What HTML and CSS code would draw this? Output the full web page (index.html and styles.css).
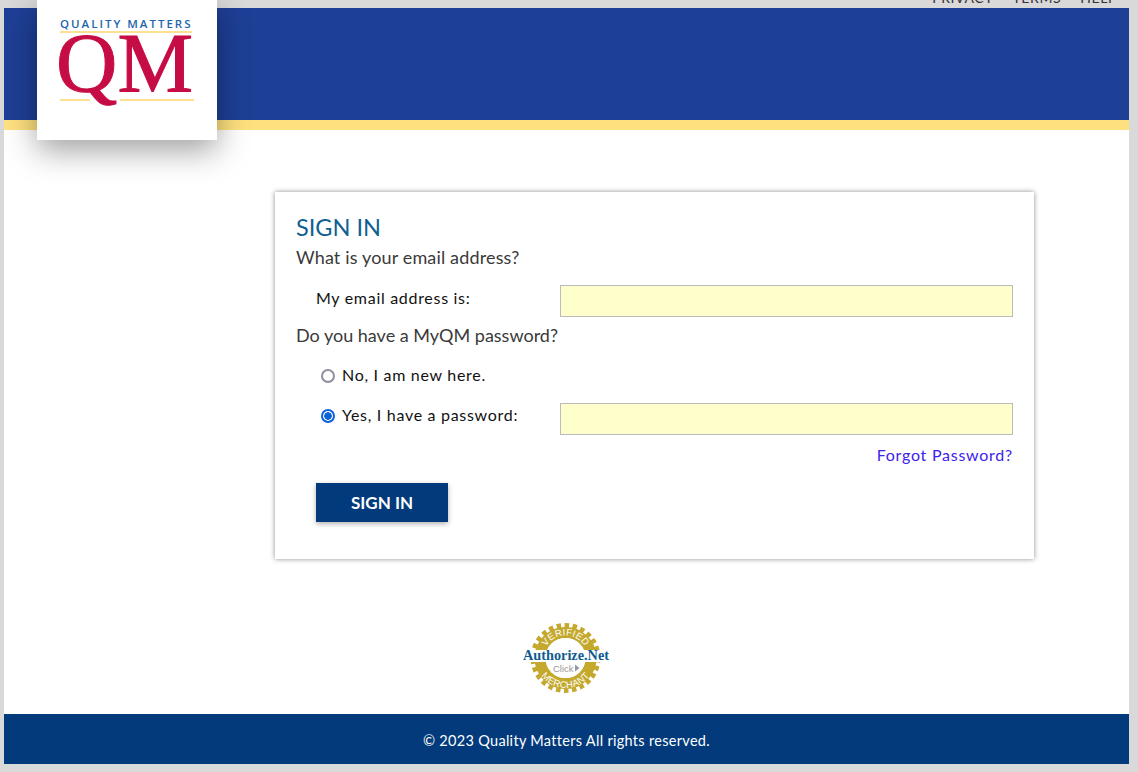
FILE: index.html
```html
<!DOCTYPE html>
<html lang="en">
<head>
<meta charset="utf-8">
<title>Sign In - Quality Matters</title>
<link rel="stylesheet" href="styles.css">
</head>
<body>
<nav class="topnav"><a>PRIVACY</a><a>TERMS</a><a>HELP</a></nav>
<div class="page">
  <header class="header">
    <div class="logo">
      <div class="logo-top">QUALITY MATTERS</div>
      <div class="logo-rule"></div>
      <div class="logo-qm">QM</div>
      <div class="logo-base"><span></span><span></span></div>
    </div>
  </header>
  <main class="main">
    <form class="card">
      <h1 class="title">SIGN IN</h1>
      <p class="question q-email">What is your email address?</p>
      <div class="row row-email">
        <label class="label label-indent">My email address is:</label>
        <input class="field" type="text">
      </div>
      <p class="question q-pass">Do you have a MyQM password?</p>
      <div class="row row-no">
        <label class="label radio-label"><input class="radio" type="radio" name="pw">No, I am new here.</label>
      </div>
      <div class="row row-yes">
        <label class="label radio-label label-yes"><input class="radio" type="radio" name="pw" checked>Yes, I have a password:</label>
        <input class="field" type="password">
      </div>
      <div class="forgot-row"><a class="forgot">Forgot Password?</a></div>
      <button class="btn" type="button">SIGN IN</button>
    </form>
    <div class="badge">
      <svg width="88" height="72" viewBox="0 0 88 72">
        <circle class="gear" cx="42.500" cy="36" r="32.500" stroke-width="5" stroke-dasharray="4.500 3.500" fill="none"/>
        <circle class="gear" cx="42.500" cy="36" r="25.500" stroke-width="11" fill="none"/>
        <circle cx="42.500" cy="36" r="20" fill="#fff"/>
        <path id="arcTop" d="M20 36 A22.500 22.500 0 0 1 65 36" fill="none"/>
        <path id="arcBot" d="M12.500 36 A30 30 0 0 0 72.500 36" fill="none"/>
        <text class="arc"><textPath href="#arcTop" startOffset="50%" text-anchor="middle">VERIFIED</textPath></text>
        <text class="arc"><textPath href="#arcBot" startOffset="50%" text-anchor="middle">MERCHANT</textPath></text>
        <rect x="0" y="28" width="88" height="12" fill="#fff"/>
        <text class="anet" x="43" y="38" text-anchor="middle" textLength="86" lengthAdjust="spacingAndGlyphs">Authorize.Net</text>
        <text class="click" x="30" y="50">Click</text>
        <path d="M52 42.500 l4.500 3.500 -4.500 3.500z" fill="#999"/>
      </svg>
    </div>
  </main>
  <footer class="footer">© 2023 Quality Matters All rights reserved.</footer>
</div>
</body>
</html>
```
FILE: styles.css
```css
* { box-sizing: border-box; }
html, body { margin: 0; height: 772px; overflow: hidden; }
body { background: #d9d9d9; font-family: Lato, "Open Sans", sans-serif; color: #333; }

.topnav {
  height: 8px;
  display: flex;
  justify-content: flex-end;
  align-items: flex-end;
  gap: 19px;
  padding: 0 21px 3px 0;
  font-size: 14px;
  line-height: 14px;
  color: #333;
  letter-spacing: .6px;
}

.page { width: 1125px; margin-left: 4px; display: flex; flex-direction: column; height: 756px; }

.header {
  position: relative;
  height: 122px;
  flex: none;
  background: #1e3f96;
  border-bottom: 10px solid #fee17f;
}

.logo {
  position: absolute;
  left: 33px;
  top: -8px;
  width: 180px;
  height: 140px;
  background: #fff;
  box-shadow: 0 10px 30px rgba(0,0,0,.38);
  padding: 17px 0 0 23px;
  display: flex;
  flex-direction: column;
}
.logo-top {
  font-family: "Open Sans", sans-serif;
  font-weight: 600;
  font-size: 11.500px;
  line-height: 14px;
  letter-spacing: 2px;
  color: #1d65ab;
  white-space: nowrap;
}
.logo-rule { height: 2px; background: #fee190; width: 132px; }
.logo-qm {
  font-family: "Liberation Serif", serif;
  font-size: 85px;
  line-height: 60px;
  height: 66px;
  margin-left: -4px;
  color: #c60c44;
  -webkit-text-stroke: 1px #c60c44;
  white-space: nowrap;
}
.logo-base { display: flex; justify-content: space-between; width: 134px; }
.logo-base span { height: 2px; background: #fee190; width: 30px; }
.logo-base span + span { width: 74px; }

.main {
  flex: 1;
  background: #fff;
  display: flex;
  flex-direction: column;
  padding-top: 62px;
}

.card {
  width: 759px;
  height: 367px;
  margin-left: 271px;
  background: #fff;
  box-shadow: 0 0 5px rgba(0,0,0,.45);
  padding: 20px 21px 0 21px;
  display: flex;
  flex-direction: column;
}
.title { margin: 0; font-size: 23.500px; line-height: 30px; font-weight: 400; color: #105f91; }
.question { margin: 0; font-size: 18px; line-height: 24px; color: #3a3a3a; }
.q-email { margin-top: 3px; letter-spacing: .15px; }
.row { display: flex; align-items: center; justify-content: space-between; }
.row-email { height: 32px; margin-top: 16px; }
.q-pass { margin-top: 6px; }
.row-no { height: 24px; margin-top: 15px; }
.row-yes { height: 32px; margin-top: 17px; }
.label { font-size: 16px; color: #111; letter-spacing: .7px; white-space: nowrap; }
.label-indent { margin-left: 20px; padding-bottom: 8px; }
.radio-label { display: flex; align-items: center; margin-left: 25px; }
.label-yes { padding-bottom: 10px; }
.radio {
  appearance: none;
  width: 14px;
  height: 14px;
  margin: 4px 7px 0 0;
  border-radius: 50%;
  border: 2px solid #8f8f9d;
  background: #fff;
}
.radio:checked { border-color: #0b63d9; background: radial-gradient(circle, #0b63d9 0 3.500px, #fff 4px); }
.field {
  width: 453px;
  height: 32px;
  background: #ffffcc;
  border: 1px solid #bbb;
  margin: 0;
  padding: 0 6px;
}
.forgot-row { display: flex; justify-content: flex-end; margin-top: 9px; }
.forgot { font-size: 16px; line-height: 22px; color: #3c22ee; letter-spacing: .75px; }
.btn {
  width: 132px;
  height: 39px;
  margin: 17px 0 0 20px;
  background: #023a7c;
  color: #fff;
  border: 0;
  font-family: Lato, sans-serif;
  font-weight: 700;
  font-size: 17px;
  box-shadow: 0 2px 5px rgba(0,0,0,.3);
}

.badge { margin: 63px 0 0 519px; width: 88px; height: 72px; line-height: 0; }
.gear { stroke: #c4a92e; }
.arc { font-family: "Liberation Sans", sans-serif; font-size: 9.500px; fill: #fff; letter-spacing: .3px; }
.anet { font-family: "Liberation Serif", serif; font-weight: 700; font-size: 15px; fill: #0d5b8f; }
.click { font-family: "Liberation Sans", sans-serif; font-size: 9.500px; fill: #999; }

.footer {
  flex: none;
  height: 50px;
  background: #023a7c;
  color: #fff;
  font-size: 14.500px;
  line-height: 53px;
  letter-spacing: .3px;
  text-align: center;
}
```
